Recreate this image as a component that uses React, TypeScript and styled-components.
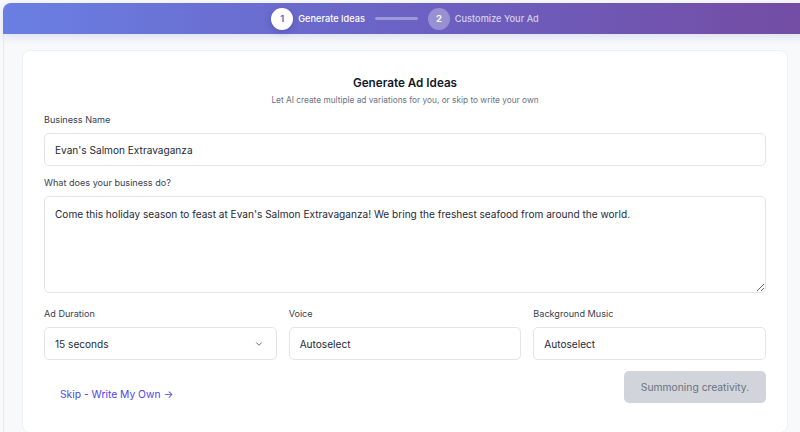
import React from "react";
import styled, { createGlobalStyle } from "styled-components";

const GlobalStyle = createGlobalStyle`
  html, body {
    margin: 0;
    padding: 0;
    background: #f8f9fb;
    font-family: Inter, "Noto Sans", "Liberation Sans", sans-serif;
    overflow: hidden;
  }
  * { box-sizing: border-box; }
`;

const Page = styled.div`
  padding: 3px 0 0 3px;
  height: 432px;
`;

const Shell = styled.div`
  width: 804px;
  height: 440px;
  border: 1px solid #e8eaef;
  border-radius: 8px;
  background: #f8f9fb;
`;

const Header = styled.header`
  height: 31px;
  margin: -1px -1px 0 -1px;
  border-radius: 8px 8px 0 0;
  background: linear-gradient(90deg, #6a7fe3 0%, #6b62c4 50%, #744ca3 100%);
  box-shadow: 0 3px 8px rgba(102, 110, 200, 0.18);
  display: flex;
  align-items: center;
  justify-content: center;
`;

const Step = styled.div`
  display: flex;
  align-items: center;
  gap: 5px;
`;

const StepDot = styled.span<{ $active?: boolean }>`
  width: 22px;
  height: 22px;
  border-radius: 50%;
  display: flex;
  align-items: center;
  justify-content: center;
  font-size: 9.5px;
  font-weight: 600;
  background: ${(p) => (p.$active ? "#ffffff" : "rgba(255,255,255,0.3)")};
  color: ${(p) => (p.$active ? "#5b5fc7" : "#ffffff")};
  box-shadow: ${(p) => (p.$active ? "0 2px 6px rgba(40,30,120,0.25)" : "none")};
`;

const StepLabel = styled.span<{ $active?: boolean }>`
  font-size: 9.2px;
  font-weight: 500;
  color: ${(p) => (p.$active ? "#ffffff" : "rgba(255,255,255,0.72)")};
`;

const StepLine = styled.span`
  width: 43px;
  height: 3px;
  border-radius: 2px;
  background: rgba(255, 255, 255, 0.35);
  margin: 0 10px;
`;

const Body = styled.div`
  padding: 16px 0 0 18px;
`;

const Card = styled.main`
  width: 766px;
  background: #ffffff;
  border: 1px solid #eef0f3;
  border-radius: 8px;
  padding: 23px 21px 22px 21px;
`;

const Title = styled.h1`
  margin: 0;
  text-align: center;
  font-size: 11.7px;
  line-height: 18px;
  font-weight: 600;
  color: #111827;
`;

const Subtitle = styled.p`
  margin: 1px 0 6px;
  text-align: center;
  font-size: 8.3px;
  line-height: 14px;
  color: #6b7280;
`;

const Field = styled.div<{ $gap?: number }>`
  display: flex;
  flex-direction: column;
  margin-bottom: ${(p) => p.$gap ?? 0}px;
`;

const Label = styled.label`
  font-size: 9.1px;
  line-height: 14px;
  color: #374151;
  margin-bottom: 6px;
`;

const TextInput = styled.input`
  height: 33px;
  border: 1px solid #e3e5e9;
  border-radius: 5px;
  padding: 0 10px;
  font-family: inherit;
  font-size: 10.1px;
  color: #1f2937;
  background: #fff;
  outline: none;
`;

const TextArea = styled.textarea`
  height: 97px;
  border: 1px solid #e3e5e9;
  border-radius: 5px;
  padding: 9px 10px;
  font-family: inherit;
  font-size: 10.1px;
  line-height: 16px;
  color: #1f2937;
  background: #fff;
  outline: none;
  resize: vertical;
`;

const Row = styled.div`
  display: grid;
  grid-template-columns: repeat(3, 1fr);
  gap: 12px;
  margin-bottom: 11px;
`;

const SelectBox = styled.div`
  height: 33px;
  border: 1px solid #e3e5e9;
  border-radius: 5px;
  padding: 0 12px 0 10px;
  display: flex;
  align-items: center;
  justify-content: space-between;
  font-size: 10.1px;
  color: #1f2937;
  background: #fff;
`;

const Actions = styled.div`
  display: flex;
  justify-content: space-between;
  align-items: flex-start;
`;

const SkipLink = styled.a`
  margin-top: 7px;
  padding: 8px 16px;
  font-size: 10.3px;
  line-height: 16px;
  color: #4f46e5;
  text-decoration: none;
  cursor: pointer;
`;

const SubmitButton = styled.button`
  width: 142px;
  height: 32px;
  border: none;
  border-radius: 5px;
  background: #d1d5db;
  color: #6b7280;
  font-family: inherit;
  font-size: 10.3px;
`;

function Chevron() {
  return (
    <svg width="10" height="10" viewBox="0 0 24 24" fill="none" stroke="#4b5563" strokeWidth="2" strokeLinecap="round" strokeLinejoin="round">
      <path d="M6 9l6 6 6-6" />
    </svg>
  );
}

export default function App() {
  return (
    <Page>
      <GlobalStyle />
      <Shell>
        <Header>
          <Step>
            <StepDot $active>1</StepDot>
            <StepLabel $active>Generate Ideas</StepLabel>
          </Step>
          <StepLine />
          <Step>
            <StepDot>2</StepDot>
            <StepLabel>Customize Your Ad</StepLabel>
          </Step>
        </Header>
        <Body>
          <Card>
            <Title>Generate Ad Ideas</Title>
            <Subtitle>Let AI create multiple ad variations for you, or skip to write your own</Subtitle>
            <Field $gap={10}>
              <Label>Business Name</Label>
              <TextInput defaultValue="Evan's Salmon Extravaganza" />
            </Field>
            <Field $gap={14}>
              <Label>What does your business do?</Label>
              <TextArea defaultValue="Come this holiday season to feast at Evan's Salmon Extravaganza! We bring the freshest seafood from around the world." />
            </Field>
            <Row>
              <Field>
                <Label>Ad Duration</Label>
                <SelectBox>
                  <span>15 seconds</span>
                  <Chevron />
                </SelectBox>
              </Field>
              <Field>
                <Label>Voice</Label>
                <SelectBox>
                  <span>Autoselect</span>
                </SelectBox>
              </Field>
              <Field>
                <Label>Background Music</Label>
                <SelectBox>
                  <span>Autoselect</span>
                </SelectBox>
              </Field>
            </Row>
            <Actions>
              <SkipLink>Skip - Write My Own →</SkipLink>
              <SubmitButton disabled>Summoning creativity.</SubmitButton>
            </Actions>
          </Card>
        </Body>
      </Shell>
    </Page>
  );
}
